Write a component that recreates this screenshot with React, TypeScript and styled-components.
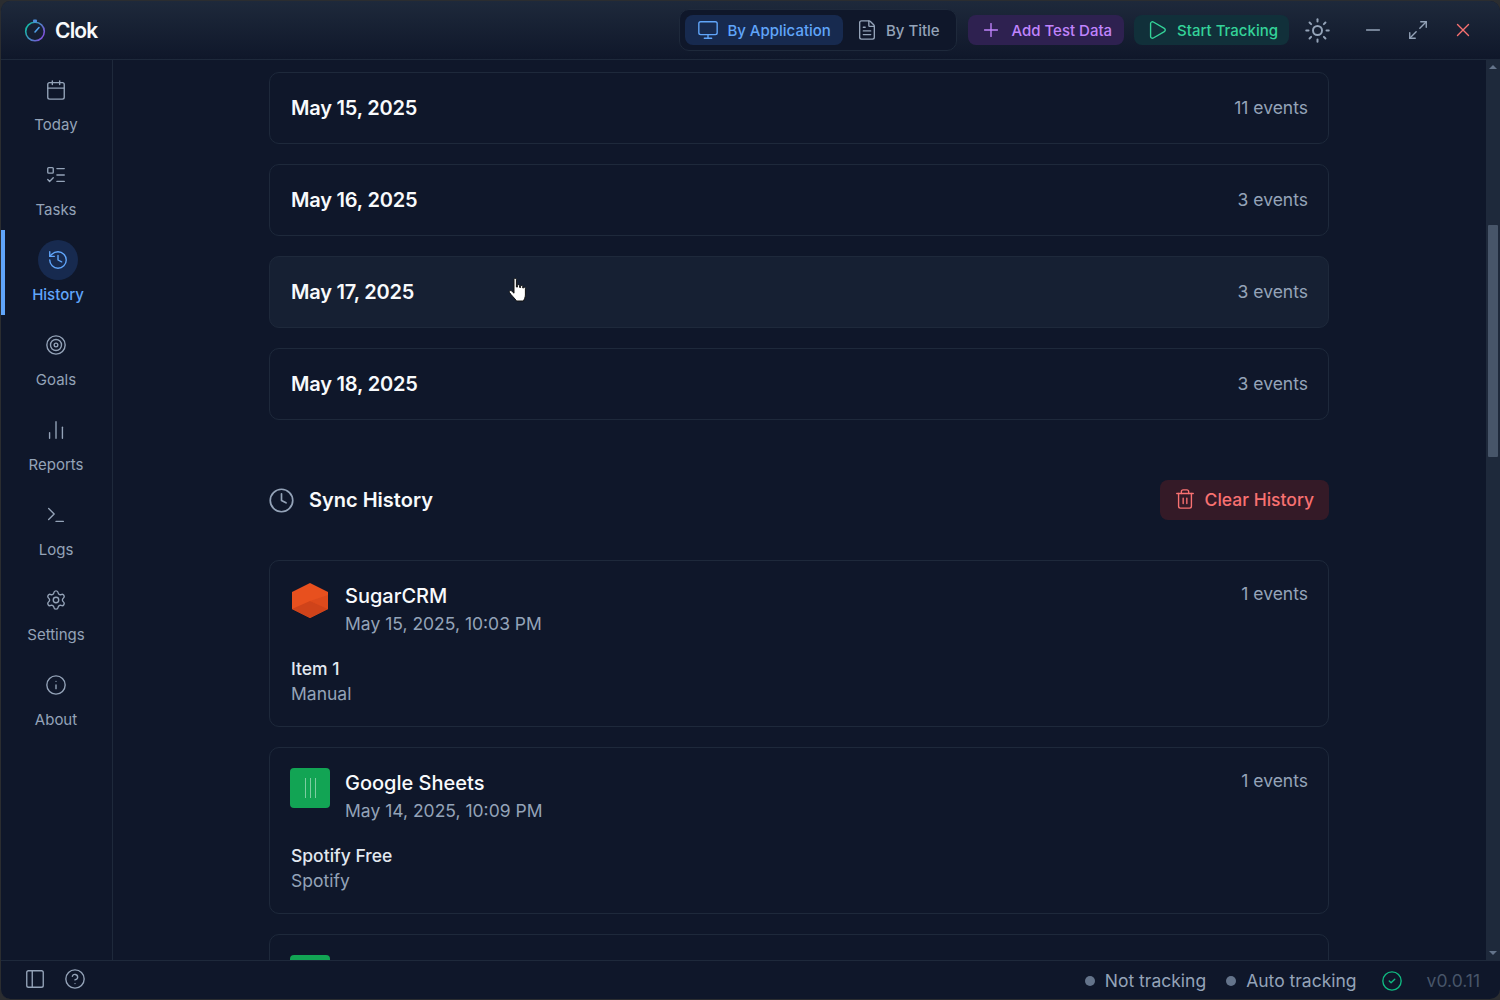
import React from 'react';
import styled, { createGlobalStyle } from 'styled-components';
import {
    Calendar,
    ChartNoAxesColumn,
    CircleCheck,
    CircleHelp,
    Clock,
    FileText,
    History,
    Info,
    ListTodo,
    Maximize2,
    Minus,
    Monitor,
    PanelLeft,
    Play,
    Plus,
    Settings,
    Sun,
    Target,
    Terminal,
    Trash2,
    X
} from 'lucide-react';

const GlobalStyle = createGlobalStyle`
    html, body {
        margin: 0;
        height: 100%;
        background: #2b2d30;
        overflow: hidden;
    }
    body {
        font-family: Inter, "Liberation Sans", sans-serif;
    }
    * {
        box-sizing: border-box;
    }
`;

const Window = styled.div`
    width: 1500px;
    height: 998px;
    margin-top: 1px;
    display: flex;
    flex-direction: column;
    background-color: #0f172a;
    border-left: 1px solid #2b2d30;
    border-radius: 10px;
    overflow: hidden;
    position: relative;
`;

const TitleBar = styled.header`
    height: 59px;
    flex: none;
    display: flex;
    align-items: center;
    background: linear-gradient(180deg, #1e293b 0%, #0f172a 100%);
    border-bottom: 1px solid #1e293b;
`;

const Logo = styled.div`
    display: flex;
    align-items: center;
    gap: 8px;
    margin-left: 22px;
    margin-right: auto;
    color: #f8fafc;
    font-size: 21px;
    font-weight: 600;
    letter-spacing: -0.8px;
`;

const ViewSwitch = styled.div`
    display: flex;
    align-items: center;
    height: 42px;
    width: 278px;
    padding: 0 5px;
    gap: 1px;
    margin-right: 11px;
    background-color: #0f172a;
    border: 1px solid #1e293b;
    border-radius: 10px;
`;

const tones = {
    blue: { bg: '#172a4f', fg: '#60a5fa' },
    idle: { bg: 'transparent', fg: '#94a3b8' },
    purple: { bg: '#2e2150', fg: '#c084fc' },
    green: { bg: '#11303a', fg: '#34d399' }
};

const BarButton = styled.button<{ $tone: keyof typeof tones }>`
    display: flex;
    align-items: center;
    gap: 8px;
    height: 30px;
    padding: 0 12px;
    border: 0;
    border-radius: 8px;
    font-family: inherit;
    font-size: 15px;
    font-weight: 500;
    white-space: nowrap;
    background-color: ${p => tones[p.$tone].bg};
    color: ${p => tones[p.$tone].fg};
`;

const ActionButton = styled(BarButton)`
    gap: 9px;
`;

const StartButton = styled(ActionButton)`
    padding-right: 11px;
`;

const ActionGap = styled.div`
    width: 10px;
`;

const ThemeToggle = styled.div`
    display: flex;
    align-items: center;
    justify-content: center;
    width: 56px;
    margin-right: 5px;
    color: #94a3b8;
`;

const WindowControl = styled.div<{ $danger?: boolean }>`
    display: flex;
    align-items: center;
    justify-content: center;
    width: 45px;
    color: ${p => (p.$danger ? '#f87171' : '#94a3b8')};
`;

const ControlsEnd = styled.div`
    width: 15px;
`;

const Middle = styled.div`
    flex: 1;
    min-height: 0;
    display: flex;
`;

const Sidebar = styled.nav`
    width: 112px;
    flex: none;
    padding-right: 1px;
    border-right: 1px solid #1e293b;
`;

const NavItem = styled.div<{ $active?: boolean }>`
    height: 85px;
    padding-top: 10px;
    display: flex;
    flex-direction: column;
    align-items: center;
    gap: 5px;
    border-left: ${p => (p.$active ? '4px solid #60a5fa' : '0')};
    color: ${p => (p.$active ? '#60a5fa' : '#94a3b8')};
    font-size: 15px;
    font-weight: ${p => (p.$active ? 500 : 400)};
`;

const NavIcon = styled.div<{ $active?: boolean }>`
    width: 40px;
    height: 40px;
    flex: none;
    display: flex;
    align-items: center;
    justify-content: center;
    border-radius: 50%;
    background-color: ${p => (p.$active ? '#172a4f' : 'transparent')};
`;

const Main = styled.main`
    flex: 1;
    min-width: 0;
    overflow: hidden;
    padding-top: 12px;
`;

const Column = styled.div`
    width: 1060px;
    margin-left: 156px;
`;

const Card = styled.div<{ $hover?: boolean }>`
    background-color: ${p => (p.$hover ? '#162033' : 'transparent')};
    border: 1px solid #1e293b;
    border-radius: 10px;
    padding: 20px;
`;

const DayCard = styled(Card)`
    display: flex;
    align-items: center;
    justify-content: space-between;
    height: 72px;
    margin-bottom: 20px;
`;

const DayName = styled.div`
    padding-left: 1px;
    color: #f8fafc;
    font-size: 20px;
    font-weight: 600;
    letter-spacing: -0.2px;
`;

const EventCount = styled.div`
    margin-bottom: 2px;
    color: #94a3b8;
    font-size: 17.5px;
`;

const SyncCount = styled(EventCount)`
    margin-top: 2px;
`;

const SectionHeader = styled.div`
    display: flex;
    align-items: center;
    height: 40px;
    margin-top: 60px;
    margin-bottom: 40px;
    color: #94a3b8;
`;

const SectionClock = styled(Clock)`
    margin-left: -1px;
`;

const SectionTitle = styled.h2`
    margin: 0 auto 0 14px;
    color: #f8fafc;
    font-size: 20px;
    font-weight: 600;
`;

const ClearButton = styled.button`
    display: flex;
    align-items: center;
    gap: 9px;
    height: 40px;
    padding: 0 15px 2px 14px;
    border: 0;
    border-radius: 8px;
    background-color: #341a27;
    color: #f87171;
    font-family: inherit;
    font-size: 17.5px;
    font-weight: 500;
`;

const SyncCard = styled(Card)`
    height: 167px;
    margin-bottom: 20px;
`;

const SyncHead = styled.div`
    display: flex;
    align-items: flex-start;
`;

const AppIcon = styled.div<{ $color?: string }>`
    width: 40px;
    height: 40px;
    flex: none;
    display: flex;
    align-items: center;
    justify-content: center;
    gap: 4px;
    border-radius: 4px;
    background-color: ${p => p.$color || 'transparent'};
`;

const SheetLine = styled.span`
    width: 1px;
    height: 20px;
    background-color: rgba(255, 255, 255, 0.45);
`;

const AppText = styled.div`
    margin-top: 1px;
    margin-left: 15px;
    margin-right: auto;
`;

const AppName = styled.div`
    color: #f8fafc;
    font-size: 20px;
    font-weight: 500;
    line-height: 28px;
`;

const AppDate = styled.div`
    color: #94a3b8;
    font-size: 17.5px;
    line-height: 28px;
`;

const SyncBody = styled.div`
    margin-top: 18px;
    padding-left: 1px;
`;

const ItemTitle = styled.div`
    color: #e2e8f0;
    font-size: 17.5px;
    font-weight: 500;
    line-height: 25px;
`;

const ItemSub = styled.div`
    color: #94a3b8;
    font-size: 17.5px;
    line-height: 25px;
`;

const ScrollTrack = styled.div`
    width: 14px;
    flex: none;
    display: flex;
    flex-direction: column;
    align-items: center;
    background-color: #1e293b;
`;

const ScrollArrow = styled.div<{ $down?: boolean }>`
    width: 0;
    height: 0;
    margin-top: ${p => (p.$down ? 'auto' : '5px')};
    margin-bottom: ${p => (p.$down ? '5px' : '0')};
    border-left: 4px solid transparent;
    border-right: 4px solid transparent;
    border-bottom: ${p => (p.$down ? '0' : '4px solid #64748b')};
    border-top: ${p => (p.$down ? '4px solid #64748b' : '0')};
`;

const ScrollThumb = styled.div`
    width: 10px;
    height: 232px;
    margin-top: 156px;
    background-color: #475569;
    border-radius: 1px;
`;

const Footer = styled.footer`
    height: 39px;
    flex: none;
    display: flex;
    align-items: center;
    padding: 0 20px 0 23px;
    border-top: 1px solid #1e293b;
    color: #94a3b8;
    font-size: 17.5px;
`;

const FooterIcons = styled.div`
    display: flex;
    align-items: center;
    gap: 18px;
    margin-right: auto;
    margin-bottom: 2px;
`;

const Status = styled.div`
    display: flex;
    align-items: center;
    gap: 10px;
    margin-right: 20px;
    padding-top: 1px;
`;

const Dot = styled.span`
    width: 10px;
    height: 10px;
    border-radius: 50%;
    background-color: #64748b;
`;

const SyncOk = styled.div`
    display: flex;
    color: #10b981;
    margin-right: 24px;
    margin-left: 4px;
    padding-top: 1px;
`;

const Version = styled.div`
    color: #475569;
`;

const Pointer = styled.svg`
    position: absolute;
    left: 507px;
    top: 276px;
`;

const navItems = [
    { label: 'Today', Icon: Calendar },
    { label: 'Tasks', Icon: ListTodo },
    { label: 'History', Icon: History, active: true },
    { label: 'Goals', Icon: Target },
    { label: 'Reports', Icon: ChartNoAxesColumn },
    { label: 'Logs', Icon: Terminal },
    { label: 'Settings', Icon: Settings },
    { label: 'About', Icon: Info }
];

const days = [
    { name: 'May 15, 2025', count: '11 events' },
    { name: 'May 16, 2025', count: '3 events' },
    { name: 'May 17, 2025', count: '3 events', hover: true },
    { name: 'May 18, 2025', count: '3 events' }
];

const TimerLogo = () => (
    <svg width="24" height="26" viewBox="0 0 24 26" fill="none">
        <defs>
            <linearGradient id="clok" x1="0" y1="0.3" x2="1" y2="0.9">
                <stop offset="0%" stopColor="#14b8a6" />
                <stop offset="100%" stopColor="#8b45e0" />
            </linearGradient>
        </defs>
        <circle cx="12" cy="14.5" r="9.3" stroke="url(#clok)" strokeWidth="1.6" />
        <rect x="10" y="2.5" width="4" height="3" rx="1" fill="#4f8fdc" />
        <path d="M12 15l4-4.5" stroke="#4f9fe8" strokeWidth="1.6" strokeLinecap="round" />
    </svg>
);

const SugarLogo = () => (
    <svg width="40" height="40" viewBox="0 0 40 40">
        <polygon points="20,2 38,11 38,28 20,37 2,28 2,11" fill="#e8501e" />
        <polygon points="38,14 38,28 20,20" fill="#dd4a1c" />
        <polygon points="2,28 20,20 38,28 20,37" fill="#cf431a" />
    </svg>
);

const HandCursor = () => (
    <Pointer width="20" height="26" viewBox="0 0 20 26">
        <path
            d="M6 2.500c0-1.600 2.400-1.600 2.400 0V10l1 .1V8.600c0-1.200 2.200-1.200 2.200 0v1.800l1 .1V9.400c0-1.200 2.100-1.200 2.100 0v1.500l.8.1c0-1 1.900-1 1.900.3V18c0 2.500-1.500 5-2 6H8.500C7 21.500 3 18 1.500 15.500c-.8-1.500 1-2.600 2.200-1.500L6 16.200z"
            fill="#fff"
            stroke="#111"
            strokeWidth="1"
        />
    </Pointer>
);

export default function App() {
    return (
        <Window>
            <GlobalStyle />
            <TitleBar>
                <Logo>
                    <TimerLogo />
                    <span>Clok</span>
                </Logo>
                <ViewSwitch>
                    <BarButton $tone="blue">
                        <Monitor size={22} strokeWidth={1.5} />
                        By Application
                    </BarButton>
                    <BarButton $tone="idle">
                        <FileText size={22} strokeWidth={1.5} />
                        By Title
                    </BarButton>
                </ViewSwitch>
                <ActionButton $tone="purple">
                    <Plus size={22} strokeWidth={1.5} />
                    Add Test Data
                </ActionButton>
                <ActionGap />
                <StartButton $tone="green">
                    <Play size={22} strokeWidth={1.5} />
                    Start Tracking
                </StartButton>
                <ThemeToggle>
                    <Sun size={27} strokeWidth={1.75} />
                </ThemeToggle>
                <WindowControl>
                    <Minus size={22} strokeWidth={1.5} />
                </WindowControl>
                <WindowControl>
                    <Maximize2 size={22} strokeWidth={1.5} />
                </WindowControl>
                <WindowControl $danger>
                    <X size={22} strokeWidth={1.5} />
                </WindowControl>
                <ControlsEnd />
            </TitleBar>
            <Middle>
                <Sidebar>
                    {navItems.map(({ label, Icon, active }) => (
                        <NavItem key={label} $active={active}>
                            <NavIcon $active={active}>
                                <Icon size={22} strokeWidth={1.5} />
                            </NavIcon>
                            {label}
                        </NavItem>
                    ))}
                </Sidebar>
                <Main>
                    <Column>
                        {days.map(day => (
                            <DayCard key={day.name} $hover={day.hover}>
                                <DayName>{day.name}</DayName>
                                <EventCount>{day.count}</EventCount>
                            </DayCard>
                        ))}
                        <SectionHeader>
                            <SectionClock size={27} strokeWidth={1.5} />
                            <SectionTitle>Sync History</SectionTitle>
                            <ClearButton>
                                <Trash2 size={22} strokeWidth={1.5} />
                                Clear History
                            </ClearButton>
                        </SectionHeader>
                        <SyncCard>
                            <SyncHead>
                                <AppIcon>
                                    <SugarLogo />
                                </AppIcon>
                                <AppText>
                                    <AppName>SugarCRM</AppName>
                                    <AppDate>May 15, 2025, 10:03 PM</AppDate>
                                </AppText>
                                <SyncCount>1 events</SyncCount>
                            </SyncHead>
                            <SyncBody>
                                <ItemTitle>Item 1</ItemTitle>
                                <ItemSub>Manual</ItemSub>
                            </SyncBody>
                        </SyncCard>
                        <SyncCard>
                            <SyncHead>
                                <AppIcon $color="#12a454">
                                    <SheetLine />
                                    <SheetLine />
                                    <SheetLine />
                                </AppIcon>
                                <AppText>
                                    <AppName>Google Sheets</AppName>
                                    <AppDate>May 14, 2025, 10:09 PM</AppDate>
                                </AppText>
                                <SyncCount>1 events</SyncCount>
                            </SyncHead>
                            <SyncBody>
                                <ItemTitle>Spotify Free</ItemTitle>
                                <ItemSub>Spotify</ItemSub>
                            </SyncBody>
                        </SyncCard>
                        <SyncCard>
                            <SyncHead>
                                <AppIcon $color="#12a454" />
                            </SyncHead>
                        </SyncCard>
                    </Column>
                </Main>
                <ScrollTrack>
                    <ScrollArrow />
                    <ScrollThumb />
                    <ScrollArrow $down />
                </ScrollTrack>
            </Middle>
            <Footer>
                <FooterIcons>
                    <PanelLeft size={22} strokeWidth={1.5} />
                    <CircleHelp size={22} strokeWidth={1.5} />
                </FooterIcons>
                <Status>
                    <Dot />
                    Not tracking
                </Status>
                <Status>
                    <Dot />
                    Auto tracking
                </Status>
                <SyncOk>
                    <CircleCheck size={22} strokeWidth={1.5} />
                </SyncOk>
                <Version>v0.0.11</Version>
            </Footer>
            <HandCursor />
        </Window>
    );
}
